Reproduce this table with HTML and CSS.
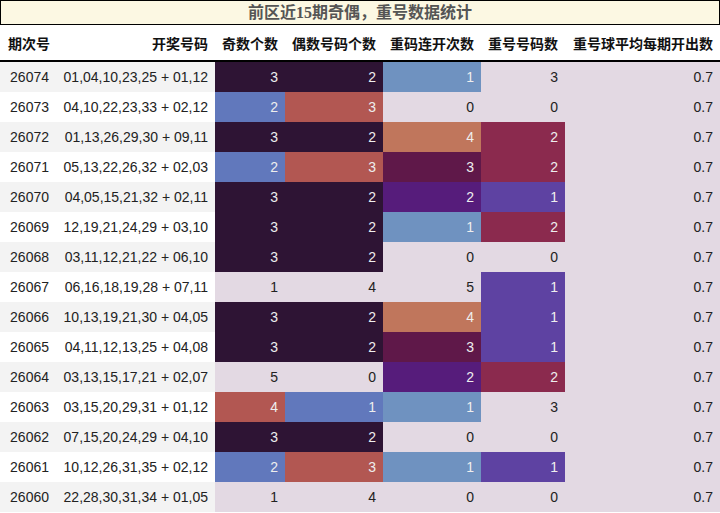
FILE: index.html
```html
<!DOCTYPE html>
<html lang="zh">
<head>
<meta charset="utf-8">
<title>前区近15期奇偶，重号数据统计</title>
<link rel="stylesheet" href="styles.css">
</head>
<body>
<div class="title">前区近15期奇偶，重号数据统计</div>
<table class="stats">
<colgroup>
<col class="w1"><col class="w2"><col class="w3"><col class="w4"><col class="w5"><col class="w6"><col class="w7">
</colgroup>
<thead>
<tr><th class="left">期次号</th><th>开奖号码</th><th>奇数个数</th><th>偶数号码个数</th><th>重码连开次数</th><th>重号号码数</th><th>重号球平均每期开出数</th></tr>
</thead>
<tbody>
<tr class="odd"><td>26074</td><td>01,04,10,23,25 + 01,12</td><td class="dk">3</td><td class="dk">2</td><td class="lb">1</td><td class="lt">3</td><td class="lt">0.7</td></tr>
<tr><td>26073</td><td>04,10,22,23,33 + 02,12</td><td class="bl">2</td><td class="rd">3</td><td class="lt">0</td><td class="lt">0</td><td class="lt">0.7</td></tr>
<tr class="odd"><td>26072</td><td>01,13,26,29,30 + 09,11</td><td class="dk">3</td><td class="dk">2</td><td class="or">4</td><td class="cr">2</td><td class="lt">0.7</td></tr>
<tr><td>26071</td><td>05,13,22,26,32 + 02,03</td><td class="bl">2</td><td class="rd">3</td><td class="mg">3</td><td class="cr">2</td><td class="lt">0.7</td></tr>
<tr class="odd"><td>26070</td><td>04,05,15,21,32 + 02,11</td><td class="dk">3</td><td class="dk">2</td><td class="pu">2</td><td class="vi">1</td><td class="lt">0.7</td></tr>
<tr><td>26069</td><td>12,19,21,24,29 + 03,10</td><td class="dk">3</td><td class="dk">2</td><td class="lb">1</td><td class="cr">2</td><td class="lt">0.7</td></tr>
<tr class="odd"><td>26068</td><td>03,11,12,21,22 + 06,10</td><td class="dk">3</td><td class="dk">2</td><td class="lt">0</td><td class="lt">0</td><td class="lt">0.7</td></tr>
<tr><td>26067</td><td>06,16,18,19,28 + 07,11</td><td class="lt">1</td><td class="lt">4</td><td class="lt">5</td><td class="vi">1</td><td class="lt">0.7</td></tr>
<tr class="odd"><td>26066</td><td>10,13,19,21,30 + 04,05</td><td class="dk">3</td><td class="dk">2</td><td class="or">4</td><td class="vi">1</td><td class="lt">0.7</td></tr>
<tr><td>26065</td><td>04,11,12,13,25 + 04,08</td><td class="dk">3</td><td class="dk">2</td><td class="mg">3</td><td class="vi">1</td><td class="lt">0.7</td></tr>
<tr class="odd"><td>26064</td><td>03,13,15,17,21 + 02,07</td><td class="lt">5</td><td class="lt">0</td><td class="pu">2</td><td class="cr">2</td><td class="lt">0.7</td></tr>
<tr><td>26063</td><td>03,15,20,29,31 + 01,12</td><td class="rd">4</td><td class="bl">1</td><td class="lb">1</td><td class="lt">3</td><td class="lt">0.7</td></tr>
<tr class="odd"><td>26062</td><td>07,15,20,24,29 + 04,10</td><td class="dk">3</td><td class="dk">2</td><td class="lt">0</td><td class="lt">0</td><td class="lt">0.7</td></tr>
<tr><td>26061</td><td>10,12,26,31,35 + 02,12</td><td class="bl">2</td><td class="rd">3</td><td class="lb">1</td><td class="vi">1</td><td class="lt">0.7</td></tr>
<tr class="odd"><td>26060</td><td>22,28,30,31,34 + 01,05</td><td class="lt">1</td><td class="lt">4</td><td class="lt">0</td><td class="lt">0</td><td class="lt">0.7</td></tr>
</tbody>
</table>
</body>
</html>
```

FILE: styles.css
```css
html, body {
  margin: 0;
  padding: 0;
  background: #ffffff;
}

body {
  font-family: "Liberation Sans", "Noto Sans CJK SC", sans-serif;
  width: 720px;
}

.title {
  box-sizing: border-box;
  height: 25px;
  border: 1px solid #000;
  background: #fcf8e3;
  color: #555;
  font-family: "Liberation Serif", "Noto Sans CJK SC", serif;
  font-weight: bold;
  font-size: 16px;
  line-height: 23px;
  text-align: center;
}

.stats {
  width: 720px;
  table-layout: fixed;
  border-collapse: collapse;
  border-spacing: 0;
  font-size: 14px;
  color: #222;
}

.w1 { width: 56px; }
.w2 { width: 159px; }
.w3 { width: 70px; }
.w4 { width: 98px; }
.w5 { width: 98px; }
.w6 { width: 84px; }
.w7 { width: 155px; }

.stats th {
  height: 35px;
  padding: 0 7px;
  text-align: right;
  font-family: "Noto Sans CJK SC", sans-serif;
  font-weight: bold;
  font-size: 14px;
  color: #111;
  border-bottom: 2px solid #000;
  white-space: nowrap;
}

.stats th.left {
  text-align: left;
  padding-left: 8px;
}

.stats td {
  height: 30px;
  padding: 0 7px;
  text-align: right;
  white-space: nowrap;
  line-height: 30px;
}

.stats tbody tr {
  background: #ffffff;
}

.stats tbody tr.odd {
  background: #f3f3f3;
}

.stats td.lt { background: #e3d9e3; color: #222; }
.stats td.dk { background: #2e1434; color: #eee; }
.stats td.bl { background: #6178bc; color: #eee; }
.stats td.rd { background: #b25752; color: #eee; }
.stats td.lb { background: #6f92c0; color: #eee; }
.stats td.or { background: #c0765c; color: #eee; }
.stats td.mg { background: #5f1849; color: #eee; }
.stats td.pu { background: #561c7b; color: #eee; }
.stats td.vi { background: #5e42a2; color: #eee; }
.stats td.cr { background: #8b2a4e; color: #eee; }
```
